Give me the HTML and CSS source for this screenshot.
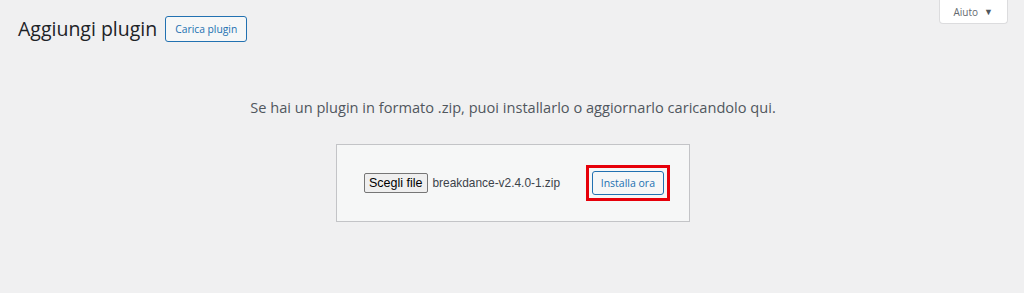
FILE: index.html
```html
<!DOCTYPE html>
<html lang="it">
<head>
<meta charset="utf-8">
<link rel="stylesheet" href="styles.css">
</head>
<body>
<div class="screen-meta">
  <button class="help-btn">Aiuto <span class="arrow">▼</span></button>
</div>
<div class="wrap">
  <div class="title-row">
    <h1 class="page-title">Aggiungi plugin</h1>
    <a class="title-action">Carica plugin</a>
  </div>
  <p class="install-help">Se hai un plugin in formato .zip, puoi installarlo o aggiornarlo caricandolo qui.</p>
  <div class="upload-box">
    <span class="file-btn">Scegli file</span>
    <span class="file-name">breakdance-v2.4.0-1.zip</span>
    <span class="highlight"><span class="install-btn">Installa ora</span></span>
  </div>
</div>
</body>
</html>
```
FILE: styles.css
```css
html, body {
  margin: 0;
  padding: 0;
  background: #f0f0f1;
  font-family: "Open Sans", "Noto Sans", sans-serif;
  color: #1d2327;
  height: 293px;
  overflow: hidden;
}
.screen-meta {
  float: right;
  margin-right: 16px;
}
.help-btn {
  display: flex;
  align-items: center;
  gap: 6px;
  height: 24px;
  padding: 0 14px 0 14px;
  background: #fff;
  border: 1px solid #dcdcde;
  border-top: none;
  border-radius: 0 0 4px 4px;
  color: #646970;
  font-family: "Open Sans", sans-serif;
  font-size: 10px;
}
.help-btn .arrow {
  font-size: 9px;
  color: #50575e;
}
.wrap {
  padding: 16px 16px 0 18px;
}
.title-row {
  display: flex;
  align-items: center;
  gap: 8px;
}
.page-title {
  margin: 0;
  font-size: 19.5px;
  font-weight: 400;
  color: #1d2327;
  line-height: 26px;
}
.title-action {
  display: inline-flex;
  align-items: center;
  height: 24px;
  padding: 0 9px;
  border: 1px solid #2271b1;
  border-radius: 3px;
  background: #f6f7f7;
  color: #2271b1;
  font-size: 10.3px;
}
.install-help {
  margin: 54px 0 0 0;
  text-align: center;
  font-size: 14.6px;
  color: #50575e;
  line-height: 22px;
}
.upload-box {
  margin: 26px auto 0 auto;
  width: 354px;
  height: 78px;
  box-sizing: border-box;
  border: 1px solid #c3c4c7;
  background: #f6f7f7;
  display: flex;
  align-items: center;
  padding: 0 0 0 27px;
}
.file-btn {
  display: inline-flex;
  align-items: center;
  height: 18px;
  padding: 0 4px;
  background: #efefef;
  border: 1px solid #767676;
  border-radius: 2px;
  font-family: "Liberation Sans", Arial, sans-serif;
  font-size: 12.5px;
  color: #000;
}
.file-name {
  margin-left: 5px;
  font-family: "Liberation Sans", Arial, sans-serif;
  font-size: 11.9px;
  color: #3c434a;
}
.highlight {
  margin-left: auto;
  margin-right: 19px;
  border: 3px solid #e6000a;
  padding: 3px;
  display: flex;
}
.install-btn {
  display: inline-flex;
  align-items: center;
  height: 22px;
  padding: 0 8px;
  border: 1px solid #2271b1;
  border-radius: 3px;
  background: #f6f7f7;
  color: #2271b1;
  font-size: 10.5px;
}
```
